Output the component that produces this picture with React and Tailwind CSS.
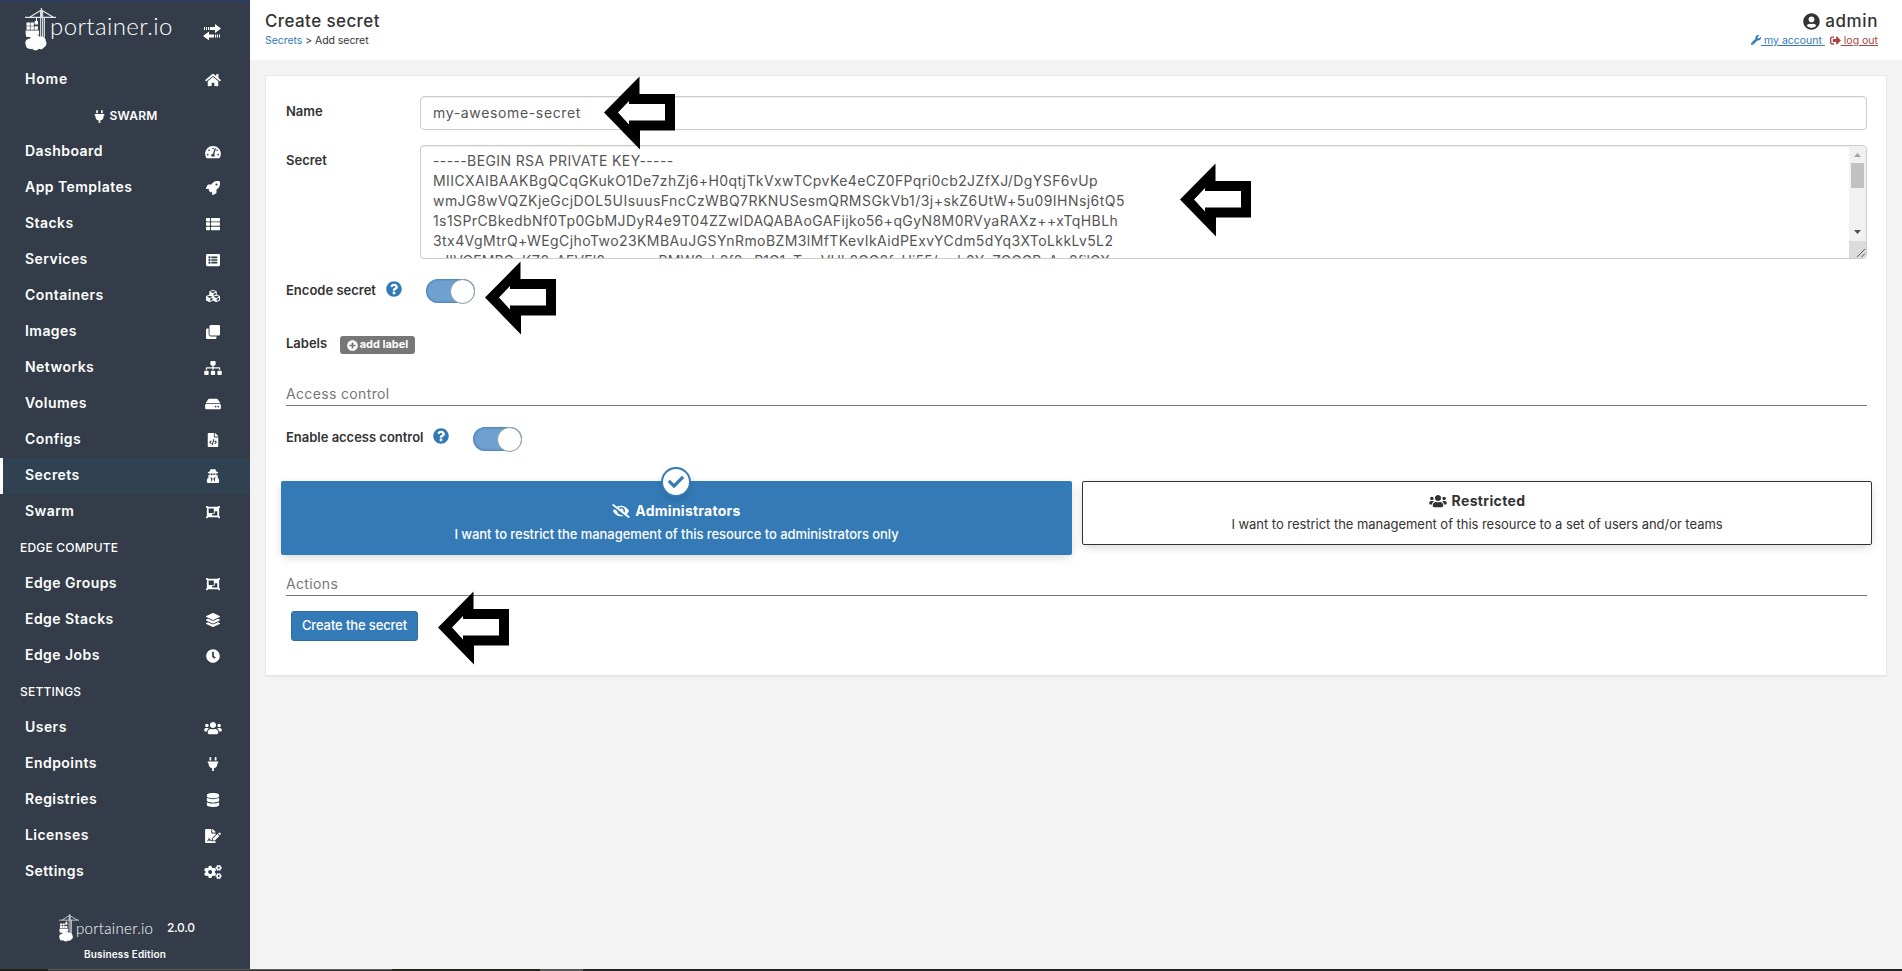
import {
  FaHome, FaPlug, FaTachometerAlt, FaRocket, FaThList, FaListAlt, FaCubes, FaClone,
  FaSitemap, FaHdd, FaFileCode, FaUserSecret, FaObjectGroup, FaLayerGroup, FaClock,
  FaUsers, FaDatabase, FaFileSignature, FaCogs, FaQuestionCircle, FaPlusCircle,
  FaCheck, FaEyeSlash, FaUserCircle, FaWrench, FaSignOutAlt,
} from "react-icons/fa";

const MENU = [
  { label: "Dashboard", Icon: FaTachometerAlt },
  { label: "App Templates", Icon: FaRocket },
  { label: "Stacks", Icon: FaThList },
  { label: "Services", Icon: FaListAlt },
  { label: "Containers", Icon: FaCubes },
  { label: "Images", Icon: FaClone },
  { label: "Networks", Icon: FaSitemap },
  { label: "Volumes", Icon: FaHdd },
  { label: "Configs", Icon: FaFileCode },
  { label: "Secrets", Icon: FaUserSecret, active: true },
  { label: "Swarm", Icon: FaObjectGroup },
  { section: "EDGE COMPUTE" },
  { label: "Edge Groups", Icon: FaObjectGroup },
  { label: "Edge Stacks", Icon: FaLayerGroup },
  { label: "Edge Jobs", Icon: FaClock },
  { section: "SETTINGS" },
  { label: "Users", Icon: FaUsers },
  { label: "Endpoints", Icon: FaPlug },
  { label: "Registries", Icon: FaDatabase },
  { label: "Licenses", Icon: FaFileSignature },
  { label: "Settings", Icon: FaCogs },
];

const KEY_LINES = [
  { text: "-----BEGIN RSA PRIVATE KEY-----", track: "tracking-[0.38px]" },
  { text: "MIICXAIBAAKBgQCqGKukO1De7zhZj6+H0qtjTkVxwTCpvKe4eCZ0FPqri0cb2JZfXJ/DgYSF6vUp", track: "tracking-[0.41px]" },
  { text: "wmJG8wVQZKjeGcjDOL5UIsuusFncCzWBQ7RKNUSesmQRMSGkVb1/3j+skZ6UtW+5u09IHNsj6tQ5", track: "tracking-[0.45px]" },
  { text: "1s1SPrCBkedbNf0Tp0GbMJDyR4e9T04ZZwIDAQABAoGAFijko56+qGyN8M0RVyaRAXz++xTqHBLh", track: "tracking-[0.41px]" },
  { text: "3tx4VgMtrQ+WEgCjhoTwo23KMBAuJGSYnRmoBZM3lMfTKevIkAidPExvYCdm5dYq3XToLkkLv5L2", track: "tracking-[0.42px]" },
  { text: "eJIVOEMPGvKZ8yAEVEl0wcssswBMW8vb8f8wR1G1vTywVHb8GG8fvHj55/wvb8YvZGGGBvAw8filGX", track: "tracking-[0.09px]" },
];

const ARROWS = [
  "left-[604px] top-[76px]",
  "left-[1180px] top-[163px]",
  "left-[485px] top-[261px]",
  "left-[438px] top-[591px]",
];

function CraneMark({ className }) {
  return (
    <svg className={className} viewBox="0 0 31 43" fill="none">
      <path d="M0 9.3H31M16.4 0V9M16.4 2L5 9M16.4 2L28 9" stroke="#e6e8ea" strokeWidth="1.2" />
      <path d="M15.6 3V29M17.6 3V29M19.4 9V29" stroke="#d4d7da" strokeWidth="1.2" />
      <path d="M11.5 10V14" stroke="#fff" strokeWidth="1" />
      <path d="M9.6 13h3.4v3.6H9.6zM1.5 14.5h3.4v3.2H1.5zM5.5 14.5h3.4v3.2H5.5zM1.5 18.3h3.4v3.4H1.5zM5.5 18.3h3.4v3.4H5.5zM9.5 18.3h3.4v3.4H9.5z" fill="#fff" />
      <path d="M.6 22.5H14V27c-3-.8-5 .5-6.300 2L1.500 29C.7 27 .5 25 .6 22.500z" fill="#fff" />
      <path d="M5 30.500a5.500 5.500 0 0 1 10-1.500c3-1.300 5.800.6 5.600 3.400 1.700 2.600.8 6-1.800 7-1.200 2-3.600 2.300-5 1.400-1.600 2.200-5 2.200-6.400 0C4 41.600.8 40 .8 37-.7 34 1.200 30.600 5 30.500z" fill="#fff" />
    </svg>
  );
}

function Toggle({ className = "" }) {
  return (
    <span className={`flex h-6 w-[49px] shrink-0 items-center justify-end rounded-full bg-[#6ea1cf] shadow-[inset_0_0_2px_1px_rgba(40,100,160,0.5)] ${className}`}>
      <span className="size-[25px] shrink-0 rounded-full border border-[#8c9aa8] bg-white" />
    </span>
  );
}

function SectionTitle({ children, className = "" }) {
  return (
    <div className={`ml-5 mr-[19px] border-b border-[#777] text-[14px] leading-[20px] tracking-[0.35px] text-[#777] ${className}`}>
      {children}
    </div>
  );
}

function Sidebar() {
  return (
    <aside className="flex w-[250px] shrink-0 flex-col border-t-2 border-[#2d3e63] bg-[#333c48] text-white">
      <div className="flex h-[60px] shrink-0 items-start pl-[25px]">
        <CraneMark className="mt-1.5 h-[43px] w-[31px] shrink-0" />
        <span className="-ml-[6px] mt-[8px] w-[153px] font-['Lato'] text-[24px] font-light leading-[32px] tracking-[0.4px]">portainer.io</span>
        <svg className="mt-[22px] h-4 w-[18px]" viewBox="0 0 18 16" fill="#fff">
          <path d="M12 0l6 4.500L12 9V6H7V3h5zM1 3h1v3H1zM3 3h1v3H3zM5 3h1.200v3H5z" />
          <path d="M6 7.500L0 12l6 4.300V13.500h5v-3H6zM12 10.500h1.200v3H12zM14 10.500h1v3h-1zM16 10.500h1v3h-1z" />
        </svg>
      </div>
      <nav className="flex flex-col text-[14px] font-semibold tracking-[0.45px]">
        <a className="flex h-9 items-center border-l-[3px] border-transparent pl-[22px] pr-[27px]">
          <span className="-mt-[3px] flex-1 tracking-[0.8px]">Home</span>
          <span className="flex w-5 justify-center">
            <FaHome className="h-[14px] w-[18px] shrink-0" />
          </span>
        </a>
        <div className="flex h-9 items-center justify-center gap-1 text-[12px] tracking-[0.2px]">
          <FaPlug className="size-[13px]" />
          <span className="-mt-px">SWARM</span>
        </div>
        {MENU.map((item) =>
          item.section ? (
            <div key={item.section} className="flex h-9 items-center pb-px pl-5 text-[12px] font-medium tracking-[0.2px]">{item.section}</div>
          ) : (
            <a
              key={item.label}
              className={`flex h-9 items-center border-l-[3px] pl-[22px] pr-[27px] ${item.active ? "border-white bg-[#304251]" : "border-transparent"}`}
            >
              <span className="-mt-[3px] flex-1">{item.label}</span>
              <span className="flex w-5 justify-center">
                <item.Icon className="h-[14px] w-[18px] shrink-0" />
              </span>
            </a>
          )
        )}
      </nav>
      <div className="mt-[24px] flex items-center pl-[59px]">
        <CraneMark className="h-[28px] w-[20px] shrink-0" />
        <span className="-ml-[3px] w-[91px] font-['Lato'] text-[15px] font-light leading-5 tracking-[0.3px]">portainer.io</span>
        <span className="text-[12px] font-medium leading-5 tracking-[-0.3px]">2.0.0</span>
      </div>
      <div className="mt-[4px] text-center text-[10px] font-semibold leading-4 tracking-[0.15px]">Business Edition</div>
    </aside>
  );
}

function Header() {
  return (
    <header className="flex h-[60px] shrink-0 justify-between bg-white pl-[15px] pr-6">
      <div className="pt-2">
        <h1 className="text-[17px] font-medium leading-[26px] tracking-[0.4px] text-[#333]">Create secret</h1>
        <div className="text-[10.5px] leading-[13px] tracking-[-0.05px] text-[#333]">
          <a className="text-[#337ab7]">Secrets</a> &gt; Add secret
        </div>
      </div>
      <div className="flex flex-col items-end pt-2">
        <div className="flex items-center gap-[5px] text-[17px] font-medium leading-[26px] tracking-[0.6px] text-[#333]">
          <FaUserCircle className="size-[17px]" />
          <span>admin</span>
        </div>
        <div className="flex text-[10.5px] leading-[13px]">
          <a className="mr-[5px] flex text-[#337ab7]">
            <FaWrench className="mt-px size-[10px]" />
            <span className="whitespace-pre underline"> my account </span>
          </a>
          <a className="flex text-[#a94442]">
            <FaSignOutAlt className="mt-px size-[11px]" />
            <span className="whitespace-pre underline"> log out</span>
          </a>
        </div>
      </div>
    </header>
  );
}

function SecretTextarea() {
  return (
    <div className="flex h-[114px] w-[1447px] overflow-hidden rounded border border-[#ccc] shadow-[inset_0_1px_1px_rgba(0,0,0,0.075)]">
      <div className="flex-1 whitespace-nowrap pl-[12px] pt-[5px] text-[14px] leading-[20px] text-[#555]">
        {KEY_LINES.map((l) => (
          <div key={l.text} className={l.track}>{l.text}</div>
        ))}
      </div>
      <div className="flex w-[17px] flex-col items-center bg-[#f1f1f1]">
        <svg className="h-[17px] w-[17px] shrink-0" viewBox="0 0 17 17"><path d="M5 11h7L8.500 7z" fill="#a3a3a3" /></svg>
        <div className="h-[25px] w-[13px] shrink-0 bg-[#c1c1c1]" />
        <div className="flex-1" />
        <svg className="h-[17px] w-[17px] shrink-0" viewBox="0 0 17 17"><path d="M5 6h7l-3.500 4z" fill="#505050" /></svg>
        <svg className="h-[17px] w-[17px] shrink-0 bg-[#dcdcdc]" viewBox="0 0 17 17"><path d="M8 16l8-8M12.500 16l3.500-3.500" stroke="#555" /></svg>
      </div>
    </div>
  );
}

function Label({ children, className = "" }) {
  return <span className={`text-[13px] font-semibold leading-5 text-[#333] ${className}`}>{children}</span>;
}

export default function App() {
  return (
    <div className="relative flex h-[971px] w-[1902px] flex-col overflow-hidden bg-[#f3f3f3] font-['Inter',sans-serif]">
      <div className="flex h-[969px]">
        <Sidebar />
        <div className="flex flex-1 flex-col">
          <Header />
          <main className="ml-[15px] mr-[15px] mt-[15px] h-[602px] border border-b-2 border-[#e7e7e7] bg-white">
            <div className="flex pl-5 pt-5">
              <div className="flex w-[134px] items-start pt-[5px]"><Label>Name</Label></div>
              <div className="flex h-[34px] w-[1447px] items-center rounded border border-[#ccc] pb-px pl-[12px] text-[14px] tracking-[0.65px] text-[#555] shadow-[inset_0_1px_1px_rgba(0,0,0,0.075)]">my-awesome-secret</div>
            </div>
            <div className="mt-[15px] flex pl-5">
              <div className="flex w-[134px] items-start pt-[5px]"><Label>Secret</Label></div>
              <SecretTextarea />
            </div>
            <div className="mt-5 flex h-6 items-center pl-5">
              <span className="flex w-[100px] pb-[3px]"><Label>Encode secret</Label></span>
              <FaQuestionCircle className="-mt-1 size-[16px] text-[#337ab7]" />
              <Toggle className="ml-6" />
            </div>
            <div className="mt-8 flex h-5 items-center pl-5">
              <span className="flex w-[54px] pb-[4px]"><Label>Labels</Label></span>
              <span className="flex h-[18px] w-[75px] items-center justify-center gap-0.5 rounded-[3px] bg-[#777] text-[11px] font-bold text-white">
                <FaPlusCircle className="size-[11px]" />
                <span className="-mt-px">add label</span>
              </span>
            </div>
            <SectionTitle className="mt-[29px] pb-px">Access control</SectionTitle>
            <div className="mt-[21px] flex h-6 items-center pl-5">
              <span className="flex w-[147px] pb-[4px]"><Label className="tracking-[-0.02px]">Enable access control</Label></span>
              <FaQuestionCircle className="-mt-1.5 size-[16px] text-[#337ab7]" />
              <Toggle className="ml-6" />
            </div>
            <div className="mt-[30px] flex items-start gap-2.5 pl-[15px]">
              <div className="relative flex h-[74px] w-[791px] flex-col items-center rounded-[2px] bg-[#337ab7] pt-5 text-white shadow-[0_3px_10px_-2px_rgba(0,0,0,0.2)]">
                <span className="absolute left-[380px] top-[-14px] flex size-[30px] items-center justify-center rounded-full border-2 border-[#337ab7] bg-white text-[#337ab7] shadow-[0_3px_10px_-2px_rgba(0,0,0,0.2)]">
                  <FaCheck className="size-[16px]" />
                </span>
                <div className="flex items-center gap-[5px] text-[14px] font-bold leading-5 tracking-[0.25px]">
                  <FaEyeSlash className="h-[14px] w-[18px]" />
                  <span>Administrators</span>
                </div>
                <p className="mt-[3px] text-[13px] font-medium leading-5 tracking-[-0.05px]">I want to restrict the management of this resource to administrators only</p>
              </div>
              <div className="flex h-16 w-[790px] flex-col items-center rounded-[2px] border border-[#333] bg-white pt-[9px] text-[#333] shadow-[0_3px_10px_-2px_rgba(0,0,0,0.2)]">
                <div className="flex items-center gap-[5px] text-[14px] font-bold leading-5 tracking-[0.35px]">
                  <FaUsers className="h-[14px] w-[18px]" />
                  <span>Restricted</span>
                </div>
                <p className="mt-[3px] text-[13px] leading-5 tracking-[-0.035px]">I want to restrict the management of this resource to a set of users and/or teams</p>
              </div>
            </div>
            <SectionTitle className="mt-[19px] pb-px">Actions</SectionTitle>
            <button className="ml-[25px] mt-[15px] block h-[30px] w-[127px] rounded-[3px] border border-[#2e6da4] bg-[#337ab7] text-[13px] font-medium tracking-[-0.12px] text-white">Create the secret</button>
          </main>
        </div>
      </div>
      <div className="flex h-0.5 shrink-0 bg-[#222]">
        <div className="w-12 bg-[#22231a]" />
        <div className="w-[344px] border-t border-[#5c5c5c] bg-[#333]" />
        <div className="w-[148px] bg-[#23241c]" />
        <div className="w-[43px] bg-[#555]" />
      </div>
      {ARROWS.map((pos) => (
        <svg key={pos} className={`absolute h-[74px] w-[71px] ${pos}`} viewBox="0 0 71 74">
          <path d="M0 36.500L35.500 0.500V18H71V54.500H36V73.500z" fill="#000" />
          <path d="M14 36.500L25 25V28H61V44.500H25V48.500z" fill="#fff" />
        </svg>
      ))}
    </div>
  );
}
